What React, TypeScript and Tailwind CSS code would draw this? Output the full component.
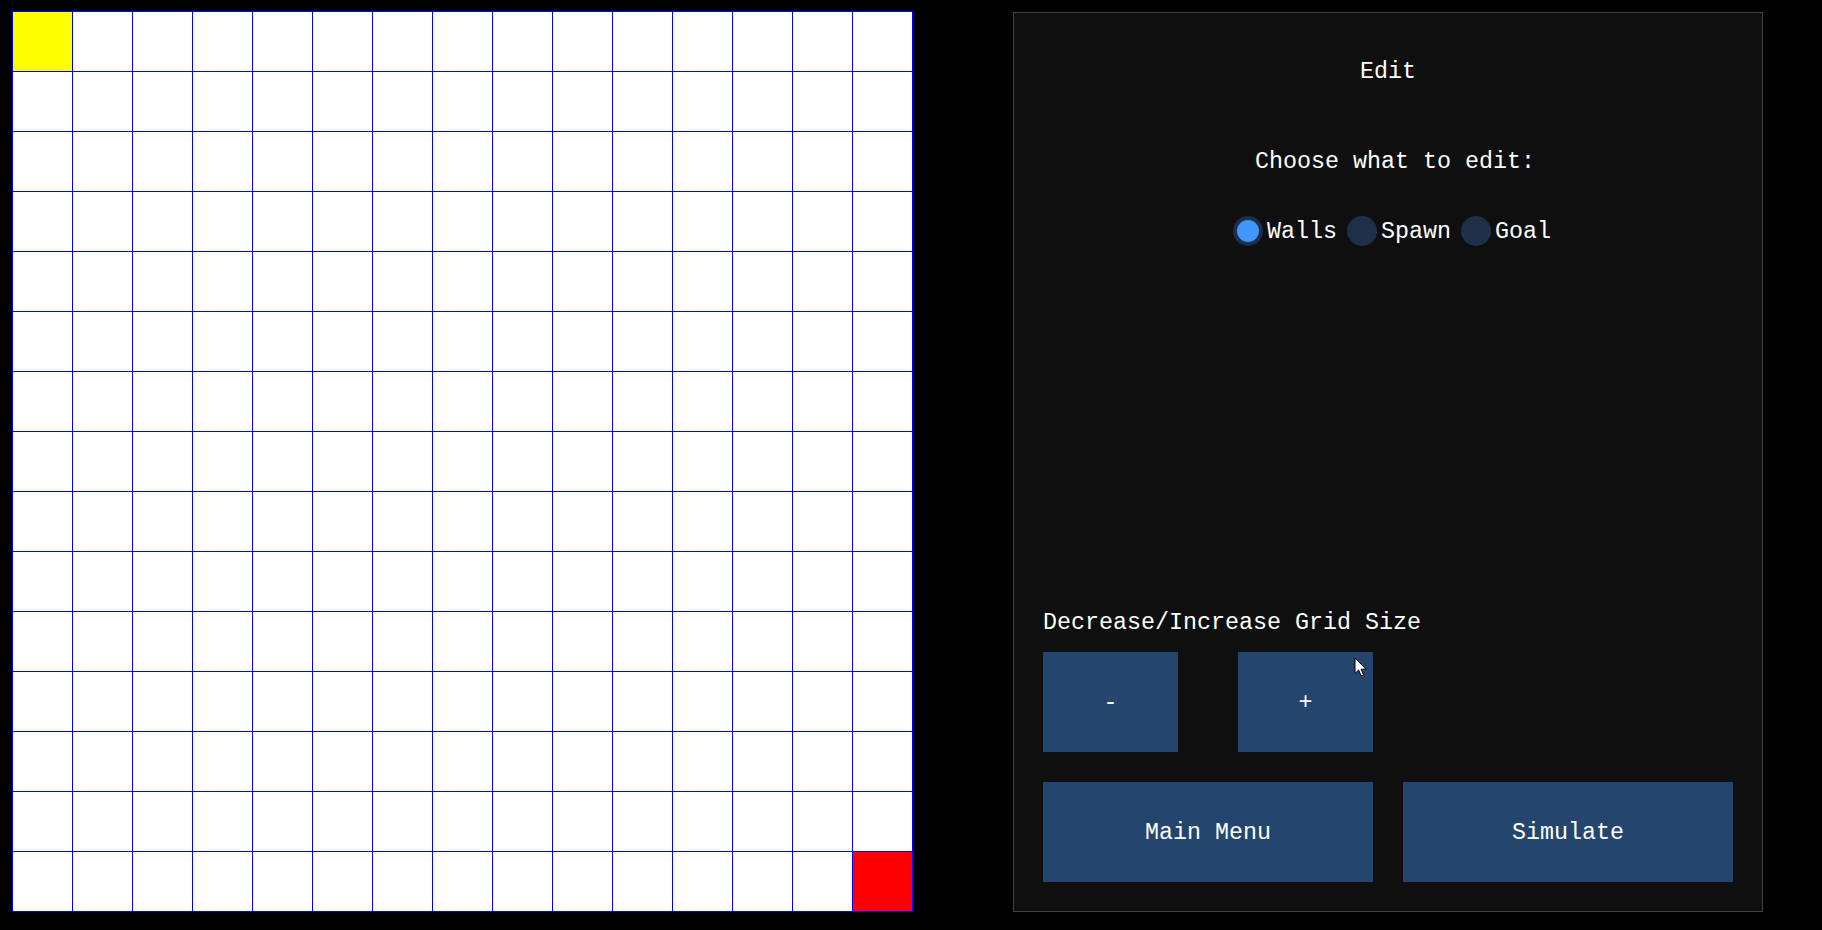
import React from "react";

function Radio({ label, checked }: { label: string; checked?: boolean }) {
  return (
    <div className="flex items-start">
      <div className="w-[30px] h-[30px] rounded-full bg-[#1d2f49] flex items-center justify-center">
        {checked ? <div className="w-[22px] h-[22px] rounded-full bg-[#4296fa]" /> : null}
      </div>
      <span className="ml-[4px] mt-[4px] whitespace-pre">{label}</span>
    </div>
  );
}

export default function App() {
  const cells: React.ReactNode[] = [];
  for (let r = 0; r < 15; r++) {
    for (let c = 0; c < 15; c++) {
      let cls = "bg-white";
      if (r === 0 && c === 0) cls = "bg-[#ffff00]";
      else if (r === 14 && c === 14) cls = "bg-[#ff0000]";
      cells.push(<div key={`${r}-${c}`} className={`w-[59px] h-[59px] ${cls}`} />);
    }
  }

  return (
    <div className="w-[1822px] h-[930px] bg-black flex items-start pt-[11px] pl-[12px] overflow-hidden">
      <div className="grid grid-cols-[repeat(15,59px)] gap-px p-px bg-[#0000ff]">{cells}</div>

      <div className="mt-px ml-[100px] w-[750px] h-[900px] border border-[#414148] bg-[#0f0f0f] flex flex-col text-white font-['Liberation_Mono',monospace] text-[23.33px] leading-[24px]">
        <div className="pt-[47px] text-center h-[71px]">Edit</div>
        <div className="mt-[66px] pl-[241px] h-[24px] whitespace-pre">Choose what to edit:</div>
        <div className="mt-[42px] pl-[219px] flex h-[30px] gap-[10px]">
          <Radio label="Walls" checked />
          <Radio label="Spawn" />
          <Radio label="Goal" />
        </div>

        <div className="flex-1" />

        <div className="px-[29px] pb-[29px] flex flex-col">
          <div className="h-[24px] whitespace-pre">Decrease/Increase Grid Size</div>
          <div className="mt-[17px] flex gap-[60px]">
            <div className="w-[135px] h-[100px] bg-[#24456d] flex items-center justify-center pt-[1px]">-</div>
            <div className="relative w-[135px] h-[100px] bg-[#24456d] flex items-center justify-center pt-[1px]">
              +
              <svg
                className="absolute left-[116px] top-[5px]"
                width="14"
                height="21"
                viewBox="0 0 14 21"
              >
                <path
                  d="M1 1 L1 16.5 L4.6 13 L7.2 19 L9.6 18 L7.1 12.2 L12 12.2 Z"
                  fill="#ffffff"
                  stroke="#000000"
                  strokeWidth="1"
                  strokeLinejoin="miter"
                />
              </svg>
            </div>
          </div>
          <div className="mt-[30px] flex gap-[30px]">
            <div className="w-[330px] h-[100px] bg-[#24456d] flex items-center justify-center pt-[1px] whitespace-pre">Main Menu</div>
            <div className="w-[330px] h-[100px] bg-[#24456d] flex items-center justify-center pt-[1px]">Simulate</div>
          </div>
        </div>
      </div>
    </div>
  );
}
